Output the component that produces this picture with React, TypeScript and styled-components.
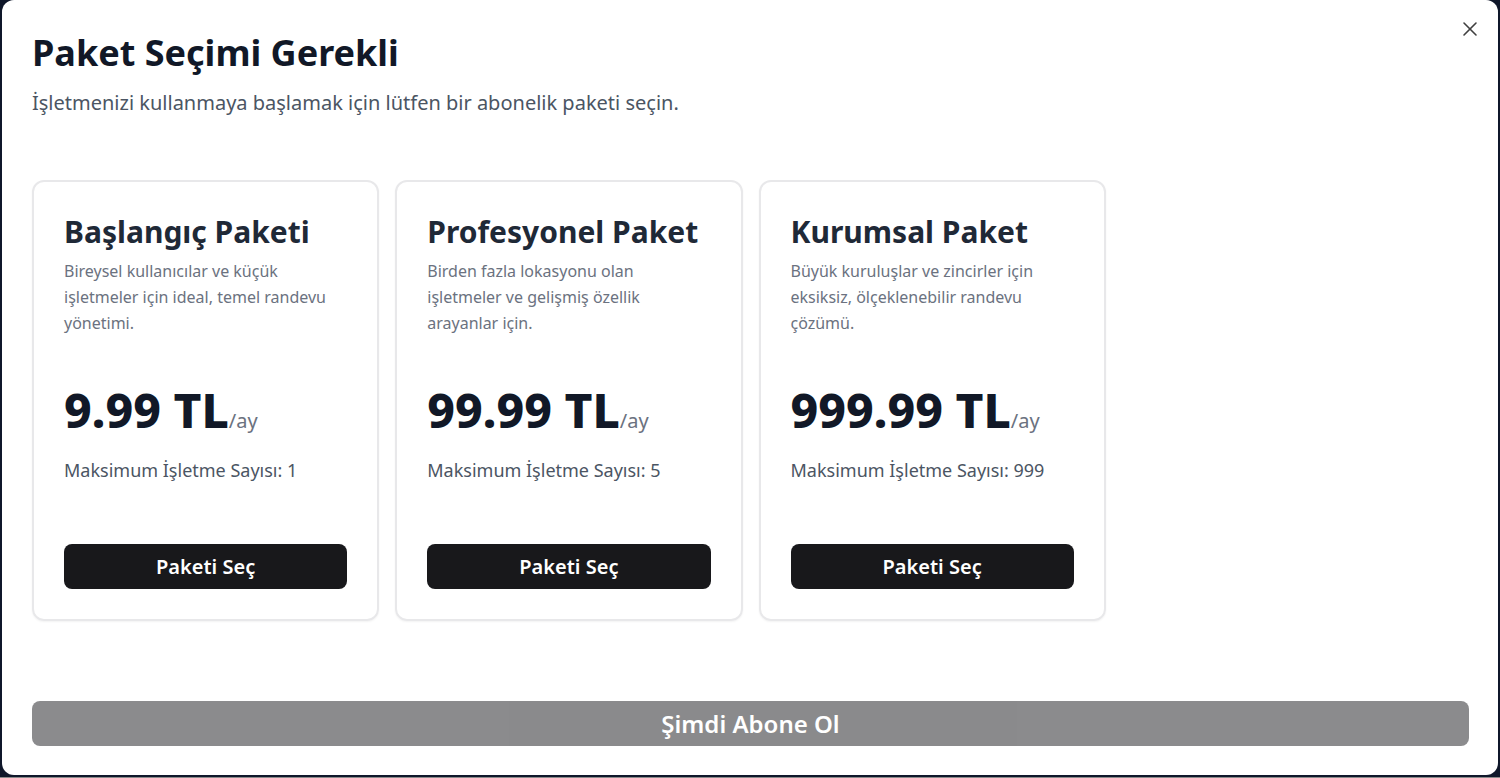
import { createGlobalStyle } from 'styled-components';
import styled from 'styled-components';
import { X } from 'lucide-react';

type Plan = {
  id: string;
  name: string;
  description: string;
  price: string;
  maxBusinesses: number;
};

const plans: Plan[] = [
  {
    id: 'starter',
    name: 'Başlangıç Paketi',
    description: 'Bireysel kullanıcılar ve küçük işletmeler için ideal, temel randevu yönetimi.',
    price: '9.99 TL',
    maxBusinesses: 1,
  },
  {
    id: 'pro',
    name: 'Profesyonel Paket',
    description: 'Birden fazla lokasyonu olan işletmeler ve gelişmiş özellik arayanlar için.',
    price: '99.99 TL',
    maxBusinesses: 5,
  },
  {
    id: 'enterprise',
    name: 'Kurumsal Paket',
    description: 'Büyük kuruluşlar ve zincirler için eksiksiz, ölçeklenebilir randevu çözümü.',
    price: '999.99 TL',
    maxBusinesses: 999,
  },
];

const App = () => {
  return (
    <>
      <GlobalStyle />
      <Backdrop>
        <Dialog>
          <CloseBtn type='button' aria-label='Kapat'>
            <X size={24} strokeWidth={1.6} />
          </CloseBtn>

          <Header>
            <Title>Paket Seçimi Gerekli</Title>
            <Subtitle>İşletmenizi kullanmaya başlamak için lütfen bir abonelik paketi seçin.</Subtitle>
          </Header>

          <PlanGrid>
            {plans.map((plan) => (
              <PlanCard key={plan.id}>
                <PlanName>{plan.name}</PlanName>
                <PlanDesc>{plan.description}</PlanDesc>
                <Price>
                  {plan.price}
                  <Period>/ay</Period>
                </Price>
                <Limit>Maksimum İşletme Sayısı: {plan.maxBusinesses}</Limit>
                <SelectBtn type='button'>Paketi Seç</SelectBtn>
              </PlanCard>
            ))}
          </PlanGrid>

          <SubscribeBtn type='button' disabled>
            Şimdi Abone Ol
          </SubscribeBtn>
        </Dialog>
      </Backdrop>
    </>
  );
};

export default App;

const GlobalStyle = createGlobalStyle`
  * {
    box-sizing: border-box;
  }

  body {
    margin: 0;
    background: #0f172a;
    font-family: 'Noto Sans', 'Open Sans', sans-serif;
  }
`;

const Backdrop = styled.div`
  height: 778px;
  padding: 0 2px 3px 2px;
  background: linear-gradient(to top, #8a8a8a 0, #8a8a8a 1px, #0f172a 1px);
`;

const Dialog = styled.div`
  position: relative;
  display: flex;
  flex-direction: column;
  height: 100%;
  padding: 23px 29px 29px 30px;
  background: #ffffff;
  border-radius: 12px;
`;

const CloseBtn = styled.button`
  position: absolute;
  top: 17px;
  right: 16px;
  display: flex;
  padding: 0;
  color: #404040;
  background: none;
  border: none;
  cursor: pointer;
`;

const Header = styled.div`
  display: flex;
  flex-direction: column;
  gap: 6px;
`;

const Title = styled.h2`
  margin: 0;
  font-size: 36px;
  line-height: 60px;
  font-weight: 700;
  color: #111827;
`;

const Subtitle = styled.p`
  margin: 0;
  font-size: 20px;
  line-height: 28px;
  color: #4b5563;
`;

const PlanGrid = styled.div`
  display: grid;
  grid-template-columns: repeat(4, 1fr);
  gap: 16px;
  margin-top: 63px;
`;

const PlanCard = styled.div`
  display: flex;
  flex-direction: column;
  height: 441px;
  padding: 30px;
  border: 2px solid #e8e8ea;
  border-radius: 12px;
  box-shadow: 0 1px 2px rgba(0, 0, 0, 0.05);
`;

const PlanName = styled.h3`
  margin: 2px 0 0;
  font-size: 30px;
  line-height: 36px;
  font-weight: 700;
  color: #1f2937;
`;

const PlanDesc = styled.p`
  margin: 8px 0 0;
  font-size: 16px;
  line-height: 26px;
  color: #6b7280;
`;

const Price = styled.div`
  margin-top: 50px;
  font-size: 48px;
  line-height: 48px;
  font-weight: 800;
  color: #111827;
`;

const Period = styled.span`
  font-size: 20px;
  font-weight: 400;
  color: #6b7280;
`;

const Limit = styled.p`
  margin: 11px 0 0;
  font-size: 18px;
  line-height: 28px;
  color: #4b5563;
`;

const SelectBtn = styled.button`
  margin-top: auto;
  height: 45px;
  font-family: inherit;
  font-size: 20px;
  font-weight: 600;
  color: #ffffff;
  background: #18181b;
  border: none;
  border-radius: 8px;
  cursor: pointer;
`;

const SubscribeBtn = styled.button`
  margin-top: auto;
  height: 45px;
  font-family: inherit;
  font-size: 24px;
  font-weight: 600;
  color: #ffffff;
  background: #18181b;
  border: none;
  border-radius: 8px;
  opacity: 0.5;
  cursor: not-allowed;
`;
